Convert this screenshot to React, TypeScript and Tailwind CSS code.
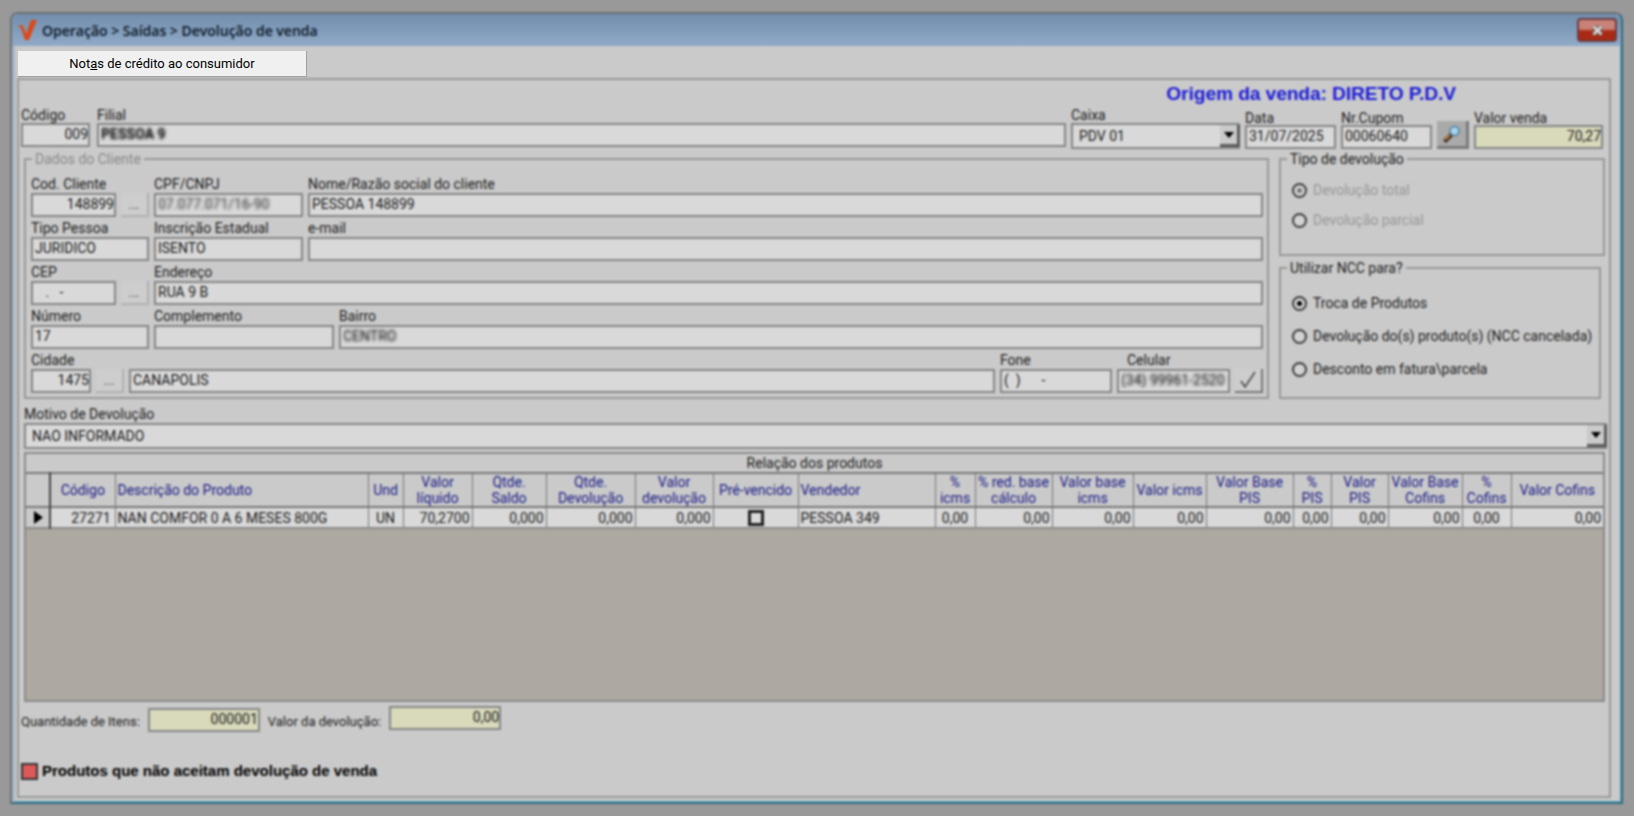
import type { InputHTMLAttributes, ReactNode } from 'react';

const FIELD =
  'h-6 w-full min-w-0 border-2 border-[#858585] pb-0.5 pl-0.5 text-[14px] leading-5';

type FieldProps = InputHTMLAttributes<HTMLInputElement> & {
  id: string;
  label: string;
  box?: string;
  look?: string;
  caption?: string;
};

function Field({ id, label, box = '', look = 'bg-[#d9d9d9]', caption = 'h-[18px]', ...rest }: FieldProps) {
  return (
    <div className={`flex flex-col ${box}`}>
      <label htmlFor={id} className={`flex items-center text-[14px] leading-4 whitespace-nowrap ${caption}`}>
        {label}
      </label>
      <input id={id} className={`${FIELD} ${look}`} {...rest} />
    </div>
  );
}

function Arrow() {
  return (
    <span className="pointer-events-none absolute inset-y-0.5 right-0 flex w-5 items-center justify-center border-r-3 border-b-3 border-[#5c5c5c] bg-[#cacaca]">
      <svg width="10" height="6" viewBox="0 0 10 6" aria-hidden="true">
        <path d="M0 0h10L5 6z" fill="#000" />
      </svg>
    </span>
  );
}

function Dots({ label }: { label: string }) {
  return (
    <button
      type="button"
      aria-label={label}
      className="h-6 w-7 shrink-0 border-r-2 border-b-2 border-[#b0b0b0] bg-[#cdcdcd] text-[14px] leading-5 text-[#555]"
    >
      ...
    </button>
  );
}

function Group({ title, box = '', muted = false, children }: { title: string; box?: string; muted?: boolean; children: ReactNode }) {
  return (
    <fieldset className={`min-w-0 border-2 border-[#989898] ${box}`}>
      <legend className={`ml-1.5 px-[3px] text-[14px] leading-[18px] ${muted ? 'text-[#8c8c8c]' : ''}`}>{title}</legend>
      {children}
    </fieldset>
  );
}

function Radio({ name, label, checked = false, disabled = false }: { name: string; label: string; checked?: boolean; disabled?: boolean }) {
  return (
    <label className={`flex items-center gap-1.5 text-[14px] leading-5 whitespace-nowrap ${disabled ? 'text-[#999]' : ''}`}>
      <span className="grid size-4 place-items-center">
        <input
          type="radio"
          name={name}
          defaultChecked={checked}
          disabled={disabled}
          className="peer col-start-1 row-start-1 size-[15px] appearance-none rounded-full border-2 border-[#3c3c3c] bg-[#d2d2d2]"
        />
        <span className="pointer-events-none col-start-1 row-start-1 hidden size-[5px] rounded-full bg-black peer-checked:block peer-disabled:bg-[#777]" />
      </span>
      {label}
    </label>
  );
}

type Column = { head: string[]; value: string; width: string; align: string };

const COLUMNS: Column[] = [
  { head: ['Código'], value: '27271', width: 'w-[65px]', align: 'text-right pr-1' },
  { head: ['Descrição do Produto'], value: 'NAN COMFOR 0 A 6 MESES 800G', width: '', align: 'text-left pl-0.5' },
  { head: ['Und'], value: 'UN', width: 'w-[35px]', align: 'text-center' },
  { head: ['Valor', 'líquido'], value: '70,2700', width: 'w-[69px]', align: 'text-right pr-0.5' },
  { head: ['Qtde.', 'Saldo'], value: '0,000', width: 'w-[74px]', align: 'text-right pr-0.5' },
  { head: ['Qtde.', 'Devolução'], value: '0,000', width: 'w-[89px]', align: 'text-right pr-0.5' },
  { head: ['Valor', 'devolução'], value: '0,000', width: 'w-[78px]', align: 'text-right pr-0.5' },
  { head: ['Pré-vencido'], value: '', width: 'w-[85px]', align: 'text-center' },
  { head: ['Vendedor'], value: 'PESSOA 349', width: 'w-[137px]', align: 'text-left pl-0.5' },
  { head: ['%', 'icms'], value: '0,00', width: 'w-[40px]', align: 'text-center' },
  { head: ['% red. base', 'cálculo'], value: '0,00', width: 'w-[77px]', align: 'text-right pr-0.5' },
  { head: ['Valor base', 'icms'], value: '0,00', width: 'w-[81px]', align: 'text-right pr-0.5' },
  { head: ['Valor icms'], value: '0,00', width: 'w-[73px]', align: 'text-right pr-0.5' },
  { head: ['Valor Base', 'PIS'], value: '0,00', width: 'w-[87px]', align: 'text-right pr-0.5' },
  { head: ['%', 'PIS'], value: '0,00', width: 'w-[38px]', align: 'text-right pr-0.5' },
  { head: ['Valor', 'PIS'], value: '0,00', width: 'w-[57px]', align: 'text-right pr-0.5' },
  { head: ['Valor Base', 'Cofins'], value: '0,00', width: 'w-[74px]', align: 'text-right pr-0.5' },
  { head: ['%', 'Cofins'], value: '0,00', width: 'w-[49px]', align: 'text-center' },
  { head: ['Valor Cofins'], value: '0,00', width: 'w-[92px]', align: 'text-right pr-0.5' },
];

function Products() {
  return (
    <div className="mt-[3px] mr-1 ml-[5px] flex flex-1 flex-col border-2 border-[#8a8a8a] bg-[#ada8a0]">
      <table className="w-full table-fixed border-collapse text-[14px]">
        <caption className="h-[18px] bg-[#cacaca] leading-[18px]">Relação dos produtos</caption>
        <colgroup>
          <col className="w-6" />
          {COLUMNS.map((c) => (
            <col key={c.head.join(' ')} className={c.width} />
          ))}
        </colgroup>
        <thead>
          <tr className="h-[34px] border-y-2 border-[#777] bg-[#cacaca] text-[#1c1c88]">
            <th className="border-r-2 border-[#444] p-0" aria-label="Seleção" />
            {COLUMNS.map((c) => (
              <th
                key={c.head.join(' ')}
                className={`border-r border-[#777] py-0 leading-4 font-normal whitespace-nowrap last:border-r-0 ${c.align.includes('text-left') ? c.align : 'px-0 text-center'}`}
              >
                {c.head.map((line) => (
                  <span key={line} className="block">
                    {line}
                  </span>
                ))}
              </th>
            ))}
          </tr>
        </thead>
        <tbody>
          <tr className="h-[21px] border-b-2 border-[#8a8a8a] bg-[#d9d9d9]">
            <td className="border-r-2 border-[#444] bg-[#cacaca] p-0">
              <svg className="ml-2" width="9" height="13" viewBox="0 0 9 13" aria-hidden="true">
                <path d="M0 0l9 6.500-9 6.500z" fill="#000" />
              </svg>
            </td>
            {COLUMNS.map((c) => (
              <td
                key={c.head.join(' ')}
                className={`border-r border-[#777] py-0 leading-[18px] whitespace-nowrap last:border-r-0 ${c.align}`}
              >
                {c.value || (
                  <input
                    type="checkbox"
                    aria-label="Pré-vencido"
                    className="mx-auto block size-4 appearance-none border-3 border-[#222] bg-[#d9d9d9]"
                  />
                )}
              </td>
            ))}
          </tr>
        </tbody>
      </table>
    </div>
  );
}

export default function App() {
  return (
    <div className="flex min-h-screen flex-col bg-[#999] pt-3 pr-[11px] pb-3 pl-2.5 font-[Roboto,'Liberation_Sans',sans-serif] text-[#1c1c1c]">
      <div className="pointer-events-none fixed inset-0 z-10 backdrop-blur-[1px]" />
      <main className="flex flex-1 flex-col rounded-t-lg border-2 border-t-[#6b7076] border-r-[#2f6a7d] border-b-[#2f6a7d] border-l-[#6b7076] bg-[#cacaca] shadow-[inset_-1px_-1px_0_#5fa9bf]">
        <header className="flex h-8 items-center rounded-t-md bg-linear-to-b from-[#728eac] to-[#90aac7] pr-1 pl-1.5">
          <svg width="20" height="22" viewBox="0 0 20 22" aria-hidden="true">
            <path d="M0 7c3-2 5-1 6 2l2 6L13 1h6l-8 20H7L4 12C3 9 2 8 0 7z" fill="#d94a1c" />
          </svg>
          <h1 className="ml-1 flex-1 pt-0.5 font-['Open_Sans',sans-serif] text-[14px] leading-5 font-semibold text-[#0c1828]">
            Operação &gt; Saídas &gt; Devolução de venda
          </h1>
          <button
            type="button"
            aria-label="Fechar"
            className="flex h-6 w-10 items-center justify-center rounded-sm border-2 border-[#6d3a40] bg-linear-to-b from-[#c98278] from-45% to-[#a82a14] to-55%"
          >
            <svg width="13" height="11" viewBox="0 0 13 11" aria-hidden="true">
              <path d="M2.500 1.500l8 8M10.500 1.500l-8 8" stroke="#555" strokeWidth="4.500" />
              <path d="M2.500 1.500l8 8M10.500 1.500l-8 8" stroke="#dcdcdc" strokeWidth="2.500" />
            </svg>
          </button>
        </header>

        <div className="flex flex-1 flex-col border-l-3 border-[#a9b6c6] pr-2.5 pb-1 pl-0.5">
          <nav className="flex pt-[5px] pl-px">
            <button
              type="button"
              className="relative z-20 h-[26px] w-[289px] border-r border-b border-[#a0a0a0] bg-[#f0f0f0] text-[13px] leading-6 text-black"
            >
              Not<u>a</u>s de crédito ao consumidor
            </button>
          </nav>

          <section className="mt-px flex flex-1 flex-col border-2 border-[#989898]">
            <p className="mt-1 mr-[153px] h-5 text-right font-['Liberation_Sans',Arial,sans-serif] text-[19px] leading-5 font-bold whitespace-nowrap text-[#1c1cd8]">
              Origem da venda: DIRETO P.D.V
            </p>

            <div className="mt-[3px] mr-1.5 ml-0.5 flex items-end gap-[5px]">
              <Field id="codigo" label="Código" box="mb-0.5 w-[69px]" caption="h-4" look="bg-[#d9d9d9] text-right" defaultValue="009" />
              <Field
                id="filial"
                label="Filial"
                box="mb-0.5 ml-0.5 min-w-0 flex-1"
                caption="h-4"
                look="bg-[#d9d9d9] font-bold text-transparent [text-shadow:0_0_3px_#000]"
                defaultValue="PESSOA 9"
              />
              <div className="flex w-[169px] flex-col">
                <label htmlFor="caixa" className="h-4 text-[14px] leading-4">
                  Caixa
                </label>
                <div className="relative">
                  <select id="caixa" className="block h-[26px] w-full appearance-none border-2 border-[#858585] bg-[#d9d9d9] px-1.5 text-[14px] leading-5">
                    <option>PDV 01</option>
                  </select>
                  <Arrow />
                </div>
              </div>
              <Field id="data" label="Data" box="w-[91px]" caption="h-3.5" defaultValue="31/07/2025" />
              <Field id="cupom" label="Nr.Cupom" box="w-[91px]" caption="h-3.5" defaultValue="00060640" />
              <button
                type="button"
                aria-label="Pesquisar"
                className="flex h-7 w-8 items-center justify-center border-r-3 border-b-3 border-[#7a7a7a] bg-[#a9a9a9]"
              >
                <svg width="18" height="18" viewBox="0 0 18 18" aria-hidden="true">
                  <path d="M1.500 16.500l7-7" stroke="#2a2320" strokeWidth="4" />
                  <path d="M2 15l5-5" stroke="#c77a35" strokeWidth="2" />
                  <circle cx="11.500" cy="6" r="4.500" fill="#a9d4ec" stroke="#4c7d9c" strokeWidth="1.500" />
                </svg>
              </button>
              <Field id="venda" label="Valor venda" box="w-[129px]" caption="h-3.5" look="bg-[#d9dabb] text-right" defaultValue="70,27" />
            </div>

            <div className="mt-px mr-1 ml-[5px] flex gap-2.5">
              <Group title="Dados do Cliente" muted box="flex-1">
                <div className="mt-[7px] mr-1 mb-1 ml-[5px] flex flex-col gap-0.5">
                  <div className="flex items-end gap-[5px]">
                    <Field id="cod" label="Cod. Cliente" box="w-[85px]" look="bg-[#d9d9d9] text-right" defaultValue="148899" />
                    <Dots label="Buscar cliente" />
                    <Field
                      id="cpf"
                      label="CPF/CNPJ"
                      box="w-[149px]"
                      look="bg-[#d9d9d9] text-transparent [text-shadow:0_0_3px_#333]"
                      defaultValue="07.077.071/16-90"
                    />
                    <Field id="nome" label="Nome/Razão social do cliente" box="min-w-0 flex-1" defaultValue="PESSOA 148899" />
                  </div>
                  <div className="flex items-end gap-[5px]">
                    <Field id="tipo" label="Tipo Pessoa" box="w-[118px]" defaultValue="JURIDICO" />
                    <Field id="ie" label="Inscrição Estadual" box="w-[149px]" defaultValue="ISENTO" />
                    <Field id="email" label="e-mail" box="min-w-0 flex-1" />
                  </div>
                  <div className="flex items-end gap-[5px]">
                    <Field id="cep" label="CEP" box="w-[85px]" defaultValue="   .   -" />
                    <Dots label="Buscar CEP" />
                    <Field id="endereco" label="Endereço" box="min-w-0 flex-1" defaultValue="RUA 9 B" />
                  </div>
                  <div className="flex items-end gap-[5px]">
                    <Field id="numero" label="Número" box="w-[118px]" defaultValue="17" />
                    <Field id="complemento" label="Complemento" box="w-[180px]" />
                    <Field
                      id="bairro"
                      label="Bairro"
                      box="min-w-0 flex-1"
                      look="bg-[#d9d9d9] text-transparent [text-shadow:0_0_3px_#111]"
                      defaultValue="CENTRO"
                    />
                  </div>
                  <div className="flex items-end gap-[5px]">
                    <Field id="cidade-cod" label="Cidade" box="w-[60px]" look="bg-[#d9d9d9] text-right" defaultValue="1475" />
                    <Dots label="Buscar cidade" />
                    <input aria-label="Nome da cidade" className={`${FIELD} flex-1 bg-[#d9d9d9]`} defaultValue="CANAPOLIS" />
                    <Field id="fone" label="Fone" box="w-[112px]" defaultValue="(  )      -" />
                    <Field
                      id="celular"
                      label="Celular"
                      box="w-[113px]"
                      caption="h-[18px] pl-2.5"
                      look="bg-[#d9d9d9] text-transparent [text-shadow:0_0_3px_#111]"
                      defaultValue="(34) 99961-2520"
                    />
                    <button
                      type="button"
                      aria-label="Confirmar celular"
                      className="flex h-6 w-7 items-center justify-center border-r-2 border-b-2 border-[#777] bg-[#cdcdcd]"
                    >
                      <svg width="16" height="18" viewBox="0 0 16 18" aria-hidden="true">
                        <path d="M1 10l4 6L15 1" fill="none" stroke="#444" strokeWidth="1.500" />
                      </svg>
                    </button>
                  </div>
                </div>
              </Group>

              <div className="flex w-[326px] flex-col justify-between">
                <Group title="Tipo de devolução" box="h-[106px]">
                  <div className="mt-3 ml-2.5 flex flex-col gap-2.5">
                    <Radio name="tipo-devolucao" label="Devolução total" checked disabled />
                    <Radio name="tipo-devolucao" label="Devolução parcial" disabled />
                  </div>
                </Group>
                <Group title="Utilizar NCC para?" box="mr-1 h-[140px]">
                  <div className="mt-4 ml-2.5 flex flex-col gap-[13px]">
                    <Radio name="ncc" label="Troca de Produtos" checked />
                    <Radio name="ncc" label="Devolução do(s) produto(s) (NCC cancelada)" />
                    <Radio name="ncc" label="Desconto em fatura\parcela" />
                  </div>
                </Group>
              </div>
            </div>

            <div className="mt-1.5 mr-0.5 ml-[5px] flex flex-col">
              <label htmlFor="motivo" className="h-[18px] text-[14px] leading-[18px]">
                Motivo de Devolução
              </label>
              <div className="relative">
                <select id="motivo" className="block h-[26px] w-full appearance-none border-2 border-[#858585] bg-[#d9d9d9] px-1.5 text-[14px] leading-5">
                  <option>NAO INFORMADO</option>
                </select>
                <Arrow />
              </div>
            </div>

            <Products />

            <footer className="h-[94px] px-0.5">
              <div className="flex items-center gap-2 pt-1.5 text-[13px] leading-5">
                <label htmlFor="itens" className="pt-1">
                  Quantidade de Itens:
                </label>
                <div className="w-28">
                  <input id="itens" className={`${FIELD} bg-[#d9dabb] text-right`} defaultValue="000001" />
                </div>
                <label htmlFor="devolvido" className="pt-1">
                  Valor da devolução:
                </label>
                <div className="-mt-1 w-28">
                  <input id="devolvido" className={`${FIELD} bg-[#d9dabb] text-right`} defaultValue="0,00" />
                </div>
              </div>
              <p className="mt-[29px] flex items-center gap-1 font-['Liberation_Sans',Arial,sans-serif] text-[15px] leading-5 font-bold text-black">
                <span className="size-[17px] border-2 border-[#333] bg-[#dd5a5a]" />
                Produtos que não aceitam devolução de venda
              </p>
            </footer>
          </section>
        </div>
      </main>
    </div>
  );
}
